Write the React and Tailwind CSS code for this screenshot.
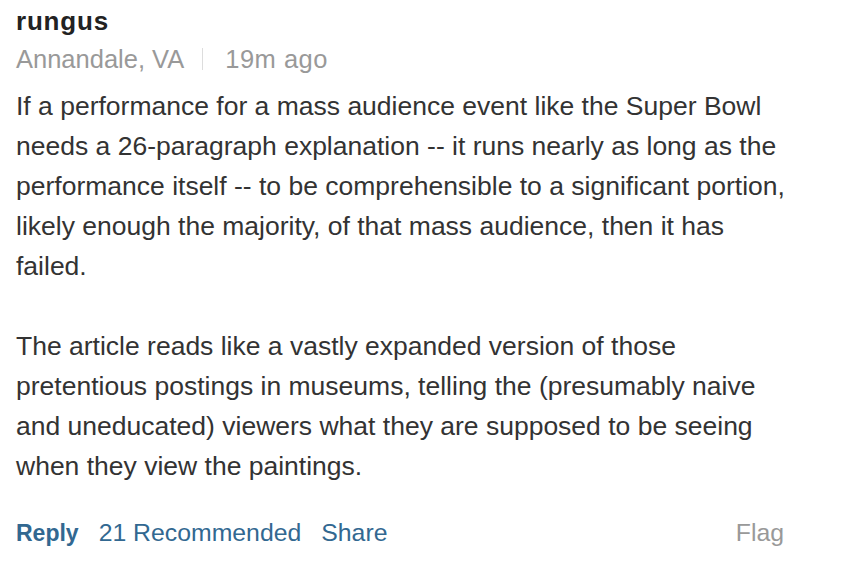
export default function App() {
  return (
    <div className="w-[854px] h-[588px] bg-white" style={{ fontFamily: '"Liberation Sans", Arial, sans-serif' }}>
      <div className="w-[800px] px-4">
        <div className="text-[26px] font-bold text-[#222] leading-[28px] pt-[7px] tracking-[0.8px]">rungus</div>
        <div className="flex items-center text-[25.5px] text-[#999] leading-[32px] mt-[8px]">
          <span>Annandale, VA</span>
          <span className="ml-[18px] mr-[22px] w-px h-[22px] bg-[#ddd]"></span>
          <span className="tracking-[0.5px]">19m ago</span>
        </div>
        <div className="text-[26.5px] text-[#333] leading-[40px] mt-[11px] whitespace-nowrap">
          <p>If a performance for a mass audience event like the Super Bowl<br />needs a 26-paragraph explanation -- it runs nearly as long as the<br />performance itself -- to be comprehensible to a significant portion,<br />likely enough the majority, of that mass audience, then it has<br />failed.</p>
          <p className="mt-[40px]">The article reads like a vastly expanded version of those<br />pretentious postings in museums, telling the (presumably naive<br />and uneducated) viewers what they are supposed to be seeing<br />when they view the paintings.</p>
        </div>
        <div className="flex items-center text-[24.8px] leading-[30px] mt-[32px]">
          <span className="text-[#326891] font-bold text-[23px]">Reply</span>
          <span className="text-[#326891] ml-[20px]">21 Recommended</span>
          <span className="text-[#326891] ml-[20px]">Share</span>
          <span className="ml-auto text-[#999]">Flag</span>
        </div>
      </div>
    </div>
  );
}
